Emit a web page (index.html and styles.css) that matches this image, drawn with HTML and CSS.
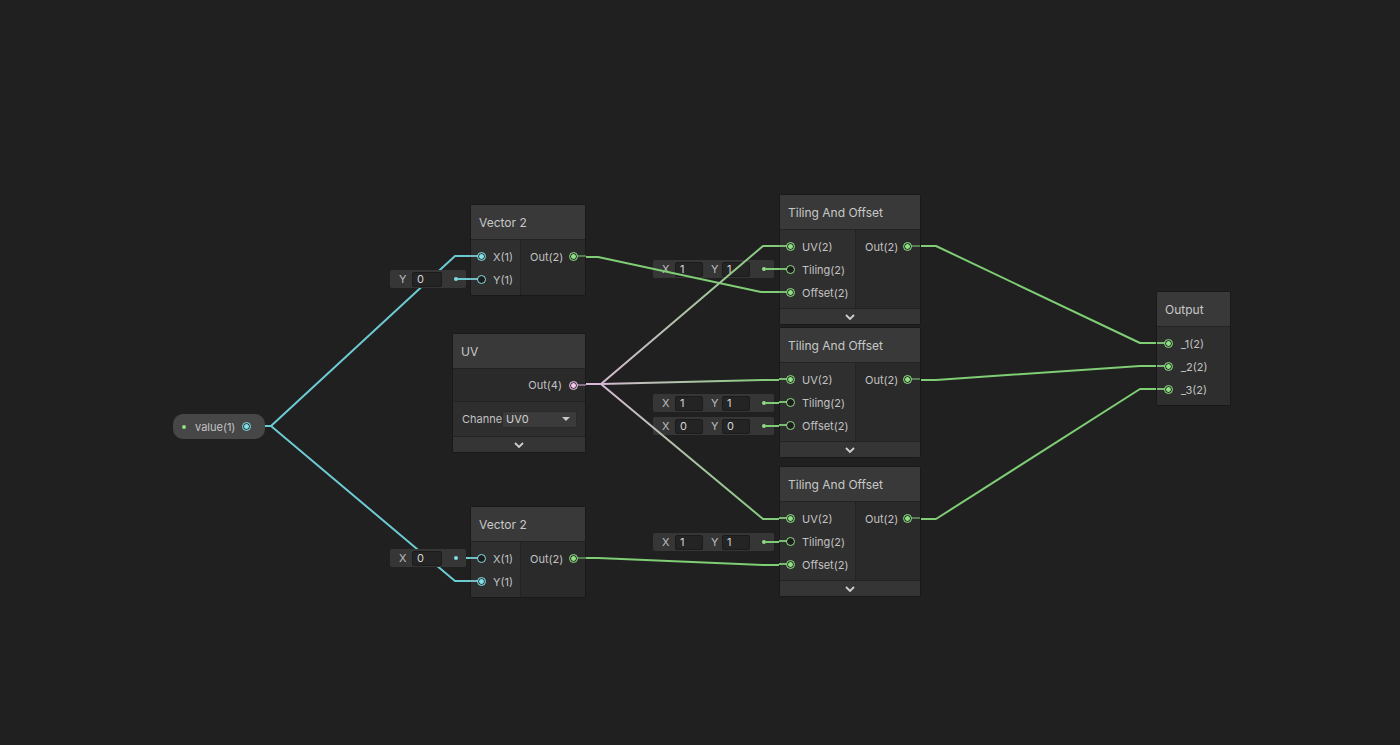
FILE: index.html
```html
<!DOCTYPE html>
<html>
<head>
<meta charset="utf-8">
<link rel="stylesheet" href="styles.css">
</head>
<body>
<div class="canvas">
  <svg class="wires" width="1400" height="745" viewBox="0 0 1400 745">
    <defs>
      <linearGradient id="gpg" gradientUnits="userSpaceOnUse" x1="590" y1="0" x2="779" y2="0">
        <stop offset="0" stop-color="#dbb8d8"/>
        <stop offset="1" stop-color="#80cc76"/>
      </linearGradient>
    </defs>
    <g fill="none" stroke-width="2" stroke-linejoin="round">
      <path class="w-cyan" d="M264 426 L271 426 L455 256 L471 256"/>
      <path class="w-cyan" d="M264 426 L271 426 L455 581 L471 581"/>
      <path class="w-cyan" d="M457 558 L471 558"/>
    </g>
  </svg>

  <div class="field f-v2a"><span class="fl">Y</span><span class="fi">0</span><span class="fdot cyan"></span></div>
  <div class="field f-v2b"><span class="fl">X</span><span class="fi">0</span><span class="fdot cyan"></span></div>
  <div class="field f-t1"><span class="fl">X</span><span class="fi">1</span><span class="fl fl2">Y</span><span class="fi">1</span><span class="fdot"></span></div>
  <div class="field f-t2a"><span class="fl">X</span><span class="fi">1</span><span class="fl fl2">Y</span><span class="fi">1</span><span class="fdot"></span></div>
  <div class="field f-t2b"><span class="fl">X</span><span class="fi">0</span><span class="fl fl2">Y</span><span class="fi">0</span><span class="fdot"></span></div>
  <div class="field f-t3"><span class="fl">X</span><span class="fi">1</span><span class="fl fl2">Y</span><span class="fi">1</span><span class="fdot"></span></div>

  <svg class="wires top" width="1400" height="745" viewBox="0 0 1400 745">
    <g fill="none" stroke-width="2" stroke-linejoin="round">
      <path class="w-cyan" d="M457 279 L471 279"/>
      <path class="w-green" d="M584 257 L598 257 L761 292 L780 292"/>
      <path stroke="url(#gpg)" d="M584 384 L601 384 L763 246 L780 246"/>
      <path stroke="url(#gpg)" d="M584 384 L601 384 L763 380 L780 380"/>
      <path stroke="url(#gpg)" d="M584 384 L601 384 L763 519 L780 519"/>
      <path class="w-green" d="M584 558 L598 558 L763 565 L780 565"/>
      <path class="w-green" d="M766 269 L780 269"/>
      <path class="w-green" d="M766 403 L780 403"/>
      <path class="w-green" d="M766 426 L780 426"/>
      <path class="w-green" d="M766 542 L780 542"/>
      <path class="w-green" d="M920 246 L936 246 L1140 343 L1157 343"/>
      <path class="w-green" d="M920 380 L936 380 L1140 366 L1157 366"/>
      <path class="w-green" d="M920 519 L936 519 L1140 389 L1157 389"/>
    </g>
  </svg>

  <div class="pill">
    <span class="pill-dot"></span>
    <span class="pill-label">value(1)</span>
    <span class="port cyan on"></span>
  </div>

  <div class="node n-v2a">
    <div class="title">Vector 2</div>
    <div class="body">
      <div class="ins">
        <div class="row in"><span class="port cyan on stub"></span><span>X(1)</span></div>
        <div class="row in"><span class="port cyan stub"></span><span>Y(1)</span></div>
      </div>
      <div class="outs">
        <div class="row out"><span>Out(2)</span><span class="port green on ostub"></span></div>
      </div>
    </div>
  </div>

  <div class="node n-v2b">
    <div class="title">Vector 2</div>
    <div class="body">
      <div class="ins">
        <div class="row in"><span class="port cyan stub"></span><span>X(1)</span></div>
        <div class="row in"><span class="port cyan on stub"></span><span>Y(1)</span></div>
      </div>
      <div class="outs">
        <div class="row out"><span>Out(2)</span><span class="port green on ostub"></span></div>
      </div>
    </div>
  </div>

  <div class="node n-uv">
    <div class="title">UV</div>
    <div class="uv-out"><span>Out(4)</span><span class="port pink on ostub"></span></div>
    <div class="uv-ch">
      <span class="ch-label">Channe</span>
      <span class="dropdown"><span>UV0</span><span class="tri"></span></span>
    </div>
    <div class="chev"><svg width="12" height="8" viewBox="0 0 12 8"><polyline points="2,2 6,6 10,2" fill="none" stroke="#d0d0d0" stroke-width="1.8"/></svg></div>
  </div>

  <div class="node tnode n-t1">
    <div class="title">Tiling And Offset</div>
    <div class="body">
      <div class="ins">
        <div class="row in"><span class="port green on stub"></span><span>UV(2)</span></div>
        <div class="row in"><span class="port green stub"></span><span>Tiling(2)</span></div>
        <div class="row in"><span class="port green on stub"></span><span>Offset(2)</span></div>
      </div>
      <div class="outs">
        <div class="row out"><span>Out(2)</span><span class="port green on ostub"></span></div>
      </div>
    </div>
    <div class="chev"><svg width="12" height="8" viewBox="0 0 12 8"><polyline points="2,2 6,6 10,2" fill="none" stroke="#d0d0d0" stroke-width="1.8"/></svg></div>
  </div>

  <div class="node tnode n-t2">
    <div class="title">Tiling And Offset</div>
    <div class="body">
      <div class="ins">
        <div class="row in"><span class="port green on stub"></span><span>UV(2)</span></div>
        <div class="row in"><span class="port green stub"></span><span>Tiling(2)</span></div>
        <div class="row in"><span class="port green stub"></span><span>Offset(2)</span></div>
      </div>
      <div class="outs">
        <div class="row out"><span>Out(2)</span><span class="port green on ostub"></span></div>
      </div>
    </div>
    <div class="chev"><svg width="12" height="8" viewBox="0 0 12 8"><polyline points="2,2 6,6 10,2" fill="none" stroke="#d0d0d0" stroke-width="1.8"/></svg></div>
  </div>

  <div class="node tnode n-t3">
    <div class="title">Tiling And Offset</div>
    <div class="body">
      <div class="ins">
        <div class="row in"><span class="port green on stub"></span><span>UV(2)</span></div>
        <div class="row in"><span class="port green stub"></span><span>Tiling(2)</span></div>
        <div class="row in"><span class="port green on stub"></span><span>Offset(2)</span></div>
      </div>
      <div class="outs">
        <div class="row out"><span>Out(2)</span><span class="port green on ostub"></span></div>
      </div>
    </div>
    <div class="chev"><svg width="12" height="8" viewBox="0 0 12 8"><polyline points="2,2 6,6 10,2" fill="none" stroke="#d0d0d0" stroke-width="1.8"/></svg></div>
  </div>

  <div class="node n-out">
    <div class="title">Output</div>
    <div class="body">
      <div class="ins wide">
        <div class="row in"><span class="port green on stub"></span><span>_1(2)</span></div>
        <div class="row in"><span class="port green on stub"></span><span>_2(2)</span></div>
        <div class="row in"><span class="port green on stub"></span><span>_3(2)</span></div>
      </div>
    </div>
  </div>
</div>
</body>
</html>
```
FILE: styles.css
```css
* { box-sizing: border-box; }
html, body { margin: 0; padding: 0; background: #202020; }
body {
  font-family: "Inter", "Noto Sans", "Liberation Sans", sans-serif;
  font-size: 11px;
  color: #c2c2c2;
}
.canvas {
  position: relative;
  width: 1400px;
  height: 745px;
  overflow: hidden;
  background: #202020;
}
.wires { position: absolute; left: 0; top: 0; }
.w-cyan { stroke: #6ccbd2; }
.w-green { stroke: #7fcd75; }

/* inline value fields */
.field {
  position: absolute;
  height: 18px;
  background: #363636;
  border-radius: 2px;
  display: flex;
  align-items: center;
  padding-left: 9px;
  color: #bdbdbd;
}
.fl { width: 13px; }
.fl2 { margin-left: 8px; width: 11px; }
.fi {
  height: 15px;
  width: 28px;
  background: #242424;
  border: 1px solid #1b1b1b;
  border-radius: 2px;
  padding-left: 4px;
  line-height: 13px;
  color: #d4d4d4;
}
.fdot {
  width: 4px; height: 4px; border-radius: 50%;
  background: #8fdc84;
  margin-left: auto;
  margin-right: 8px;
}
.fdot.cyan { background: #7fdde3; }
.f-v2a { left: 390px; top: 270px; width: 76px; }
.f-v2b { left: 390px; top: 549px; width: 76px; }
.f-v2a .fi, .f-v2b .fi { width: 30px; }
.f-t1 { left: 653px; top: 260px; width: 121px; }
.f-t2a { left: 653px; top: 394px; width: 121px; }
.f-t2b { left: 653px; top: 417px; width: 121px; }
.f-t3 { left: 653px; top: 533px; width: 121px; }

/* ports */
.port {
  position: relative;
  display: inline-block;
  width: 9px; height: 9px;
  border-radius: 50%;
  border: 1.5px solid currentColor;
  background: #1c1c1c;
  flex: none;
}
.port.on { background: radial-gradient(circle, currentColor 0 2px, #2b3a2b 2.6px); }
.port.cyan { color: #84e0e6; }
.port.cyan.on { background: radial-gradient(circle, #84e0e6 0 2px, #2c4446 2.6px); }
.port.green { color: #8fe085; }
.port.pink { color: #efc8ea; }
.port.pink.on { background: radial-gradient(circle, #efc8ea 0 2px, #4a3a48 2.6px); }
.port.stub::before {
  content: "";
  position: absolute;
  right: 100%;
  top: 2px;
  width: 8px;
  height: 2px;
  background: currentColor;
  opacity: 0.8;
}
.port.ostub::after {
  content: "";
  position: absolute;
  left: 100%;
  top: 2px;
  width: 9px;
  height: 2px;
  background: currentColor;
  opacity: 0.45;
}

/* value pill */
.pill {
  position: absolute;
  left: 173px; top: 414px;
  width: 92px; height: 25px;
  border-radius: 10px;
  background: #474747;
  display: flex;
  align-items: center;
  padding-left: 9px;
}
.pill-dot { width: 4px; height: 4px; border-radius: 50%; background: #8fdc84; }
.pill-label { margin-left: 9px; color: #c4c4c4; }
.pill .port { margin-left: 7px; }

/* nodes */
.node {
  position: absolute;
  background: #2c2c2c;
  border: 1px solid #191919;
  border-radius: 2px;
}
.title {
  height: 35px;
  background: #393939;
  border-bottom: 1px solid #232323;
  display: flex;
  align-items: center;
  padding-left: 8px;
  font-size: 12px;
  color: #c8c8c8;
}
.body { display: flex; }
.ins {
  background: #2f2f2f;
  border-right: 1px solid #232323;
  padding: 5px 0 3px;
}
.ins.wide { flex: 1; border-right: none; }
.outs {
  flex: 1;
  background: #2a2a2a;
  padding: 5px 0 3px;
}
.row {
  height: 23px;
  display: flex;
  align-items: center;
}
.row.in { padding-left: 6px; gap: 7px; }
.row.out { padding-left: 9px; padding-right: 7px; justify-content: space-between; }

.n-v2a { left: 470px; top: 204px; width: 116px; }
.n-v2b { left: 470px; top: 506px; width: 116px; }
.n-v2a .ins, .n-v2b .ins { width: 50px; }
.n-v2a .body, .n-v2b .body { height: 55px; }

.tnode { width: 142px; }
.tnode .ins { width: 76px; }
.tnode .body { height: 78px; }
.tnode .row.out { padding-left: 9px; padding-right: 8px; }
.n-t1 { left: 779px; top: 194px; }
.n-t2 { left: 779px; top: 327px; }
.n-t3 { left: 779px; top: 466px; }

.chev {
  height: 16px;
  background: #353535;
  border-top: 1px solid #232323;
  display: flex;
  align-items: center;
  justify-content: center;
}

.n-uv { left: 452px; top: 333px; width: 134px; }
.uv-out {
  height: 33px;
  background: #2a2a2a;
  border-bottom: 1px solid #232323;
  display: flex;
  align-items: center;
  justify-content: flex-end;
  gap: 7px;
  padding-right: 7px;
}
.uv-ch {
  height: 34px;
  background: #2e2e2e;
  display: flex;
  align-items: center;
  padding-left: 9px;
}
.ch-label { width: 40px; overflow: hidden; white-space: nowrap; }
.dropdown {
  width: 75px;
  height: 17px;
  background: #3b3b3b;
  border: 1px solid #2a2a2a;
  border-radius: 2px;
  display: flex;
  align-items: center;
  justify-content: space-between;
  padding: 0 6px 0 3px;
  color: #d0d0d0;
}
.tri {
  width: 0; height: 0;
  border-left: 4px solid transparent;
  border-right: 4px solid transparent;
  border-top: 4px solid #c8c8c8;
}

.n-out { left: 1156px; top: 291px; width: 75px; }
.n-out .ins { background: #2e2e2e; padding: 5px 0 4px; }
.n-out .row.in { padding-left: 7px; gap: 8px; }
```
